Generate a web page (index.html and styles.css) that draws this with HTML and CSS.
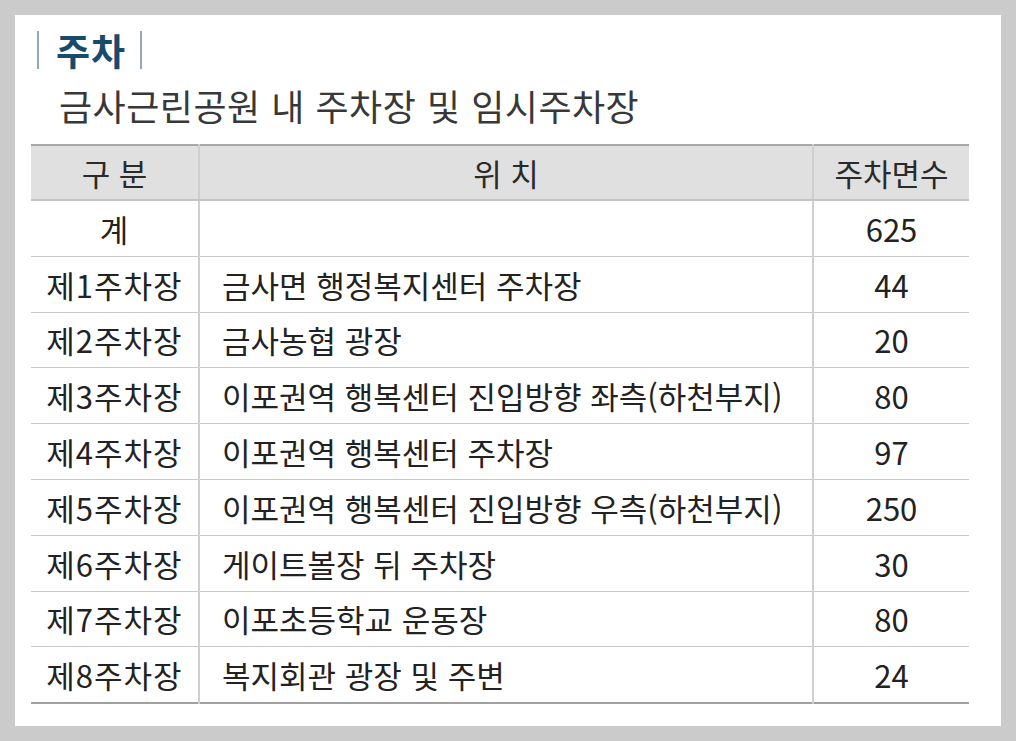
FILE: index.html
```html
<!DOCTYPE html>
<html lang="ko">
<head>
<meta charset="utf-8">
<link rel="stylesheet" href="styles.css">
</head>
<body>
<div class="panel">
  <div class="title"><span class="bar"></span><span class="title-text">주차</span><span class="bar"></span></div>
  <div class="subtitle">금사근린공원 내 주차장 및 임시주차장</div>
  <table class="tbl">
    <thead>
      <tr><th class="c1">구 분</th><th class="c2">위 치</th><th class="c3">주차면수</th></tr>
    </thead>
    <tbody>
      <tr><td class="c1">계</td><td class="c2"></td><td class="c3">625</td></tr>
      <tr><td class="c1">제1주차장</td><td class="c2 left">금사면 행정복지센터 주차장</td><td class="c3">44</td></tr>
      <tr><td class="c1">제2주차장</td><td class="c2 left">금사농협 광장</td><td class="c3">20</td></tr>
      <tr><td class="c1">제3주차장</td><td class="c2 left">이포권역 행복센터 진입방향 좌측(하천부지)</td><td class="c3">80</td></tr>
      <tr><td class="c1">제4주차장</td><td class="c2 left">이포권역 행복센터 주차장</td><td class="c3">97</td></tr>
      <tr><td class="c1">제5주차장</td><td class="c2 left">이포권역 행복센터 진입방향 우측(하천부지)</td><td class="c3">250</td></tr>
      <tr><td class="c1">제6주차장</td><td class="c2 left">게이트볼장 뒤 주차장</td><td class="c3">30</td></tr>
      <tr><td class="c1">제7주차장</td><td class="c2 left">이포초등학교 운동장</td><td class="c3">80</td></tr>
      <tr><td class="c1">제8주차장</td><td class="c2 left">복지회관 광장 및 주변</td><td class="c3">24</td></tr>
    </tbody>
  </table>
</div>
</body>
</html>
```
FILE: styles.css
```css
html, body {
  margin: 0;
  padding: 0;
  background: #cbcbcb;
}
body {
  padding: 15px;
  width: 1016px;
  height: 741px;
  box-sizing: border-box;
  font-family: "Noto Sans CJK KR", "Noto Sans", sans-serif;
}
.panel {
  width: 986px;
  height: 711px;
  background: #fff;
  box-sizing: border-box;
  padding: 15px 0 0 16px;
}
.title {
  display: flex;
  align-items: center;
  height: 40px;
  padding-left: 6px;
}
.bar {
  display: inline-block;
  width: 2px;
  height: 38px;
  background: #8fa8ba;
}
.title-text {
  font-size: 37px;
  font-weight: 700;
  color: #184a6e;
  line-height: 40px;
  margin: 0 14px 0 17px;
  letter-spacing: 1px;
}
.subtitle {
  font-size: 36px;
  color: #383838;
  line-height: 44px;
  margin: 13px 0 0 28px;
  letter-spacing: 0.5px;
}
.tbl {
  margin-top: 17px;
  border-collapse: collapse;
  width: 938px;
  table-layout: fixed;
  border-top: 2px solid #a8a8a8;
  border-bottom: 2px solid #a0a0a0;
  color: #222;
  font-size: 31px;
}
.tbl th {
  background: #e0e0e0;
  font-weight: 400;
  color: #2a2a2a;
  height: 53px;
  padding: 0;
  border-bottom: 2px solid #c4c4c4;
}
.tbl td {
  height: 54.8px;
  padding: 0;
  border-bottom: 1px solid #c8c8c8;
  text-align: center;
  white-space: nowrap;
}
.tbl tr:last-child td {
  border-bottom: none;
}
.tbl .c2, .tbl .c3 {
  border-left: 2px solid #cfcfcf;
}
.c1 { width: 167px; }
.c3 { width: 155px; }
.tbl td.c1 {
  letter-spacing: 1px;
}
.tbl td.left {
  text-align: left;
  padding-left: 22px;
}
```
